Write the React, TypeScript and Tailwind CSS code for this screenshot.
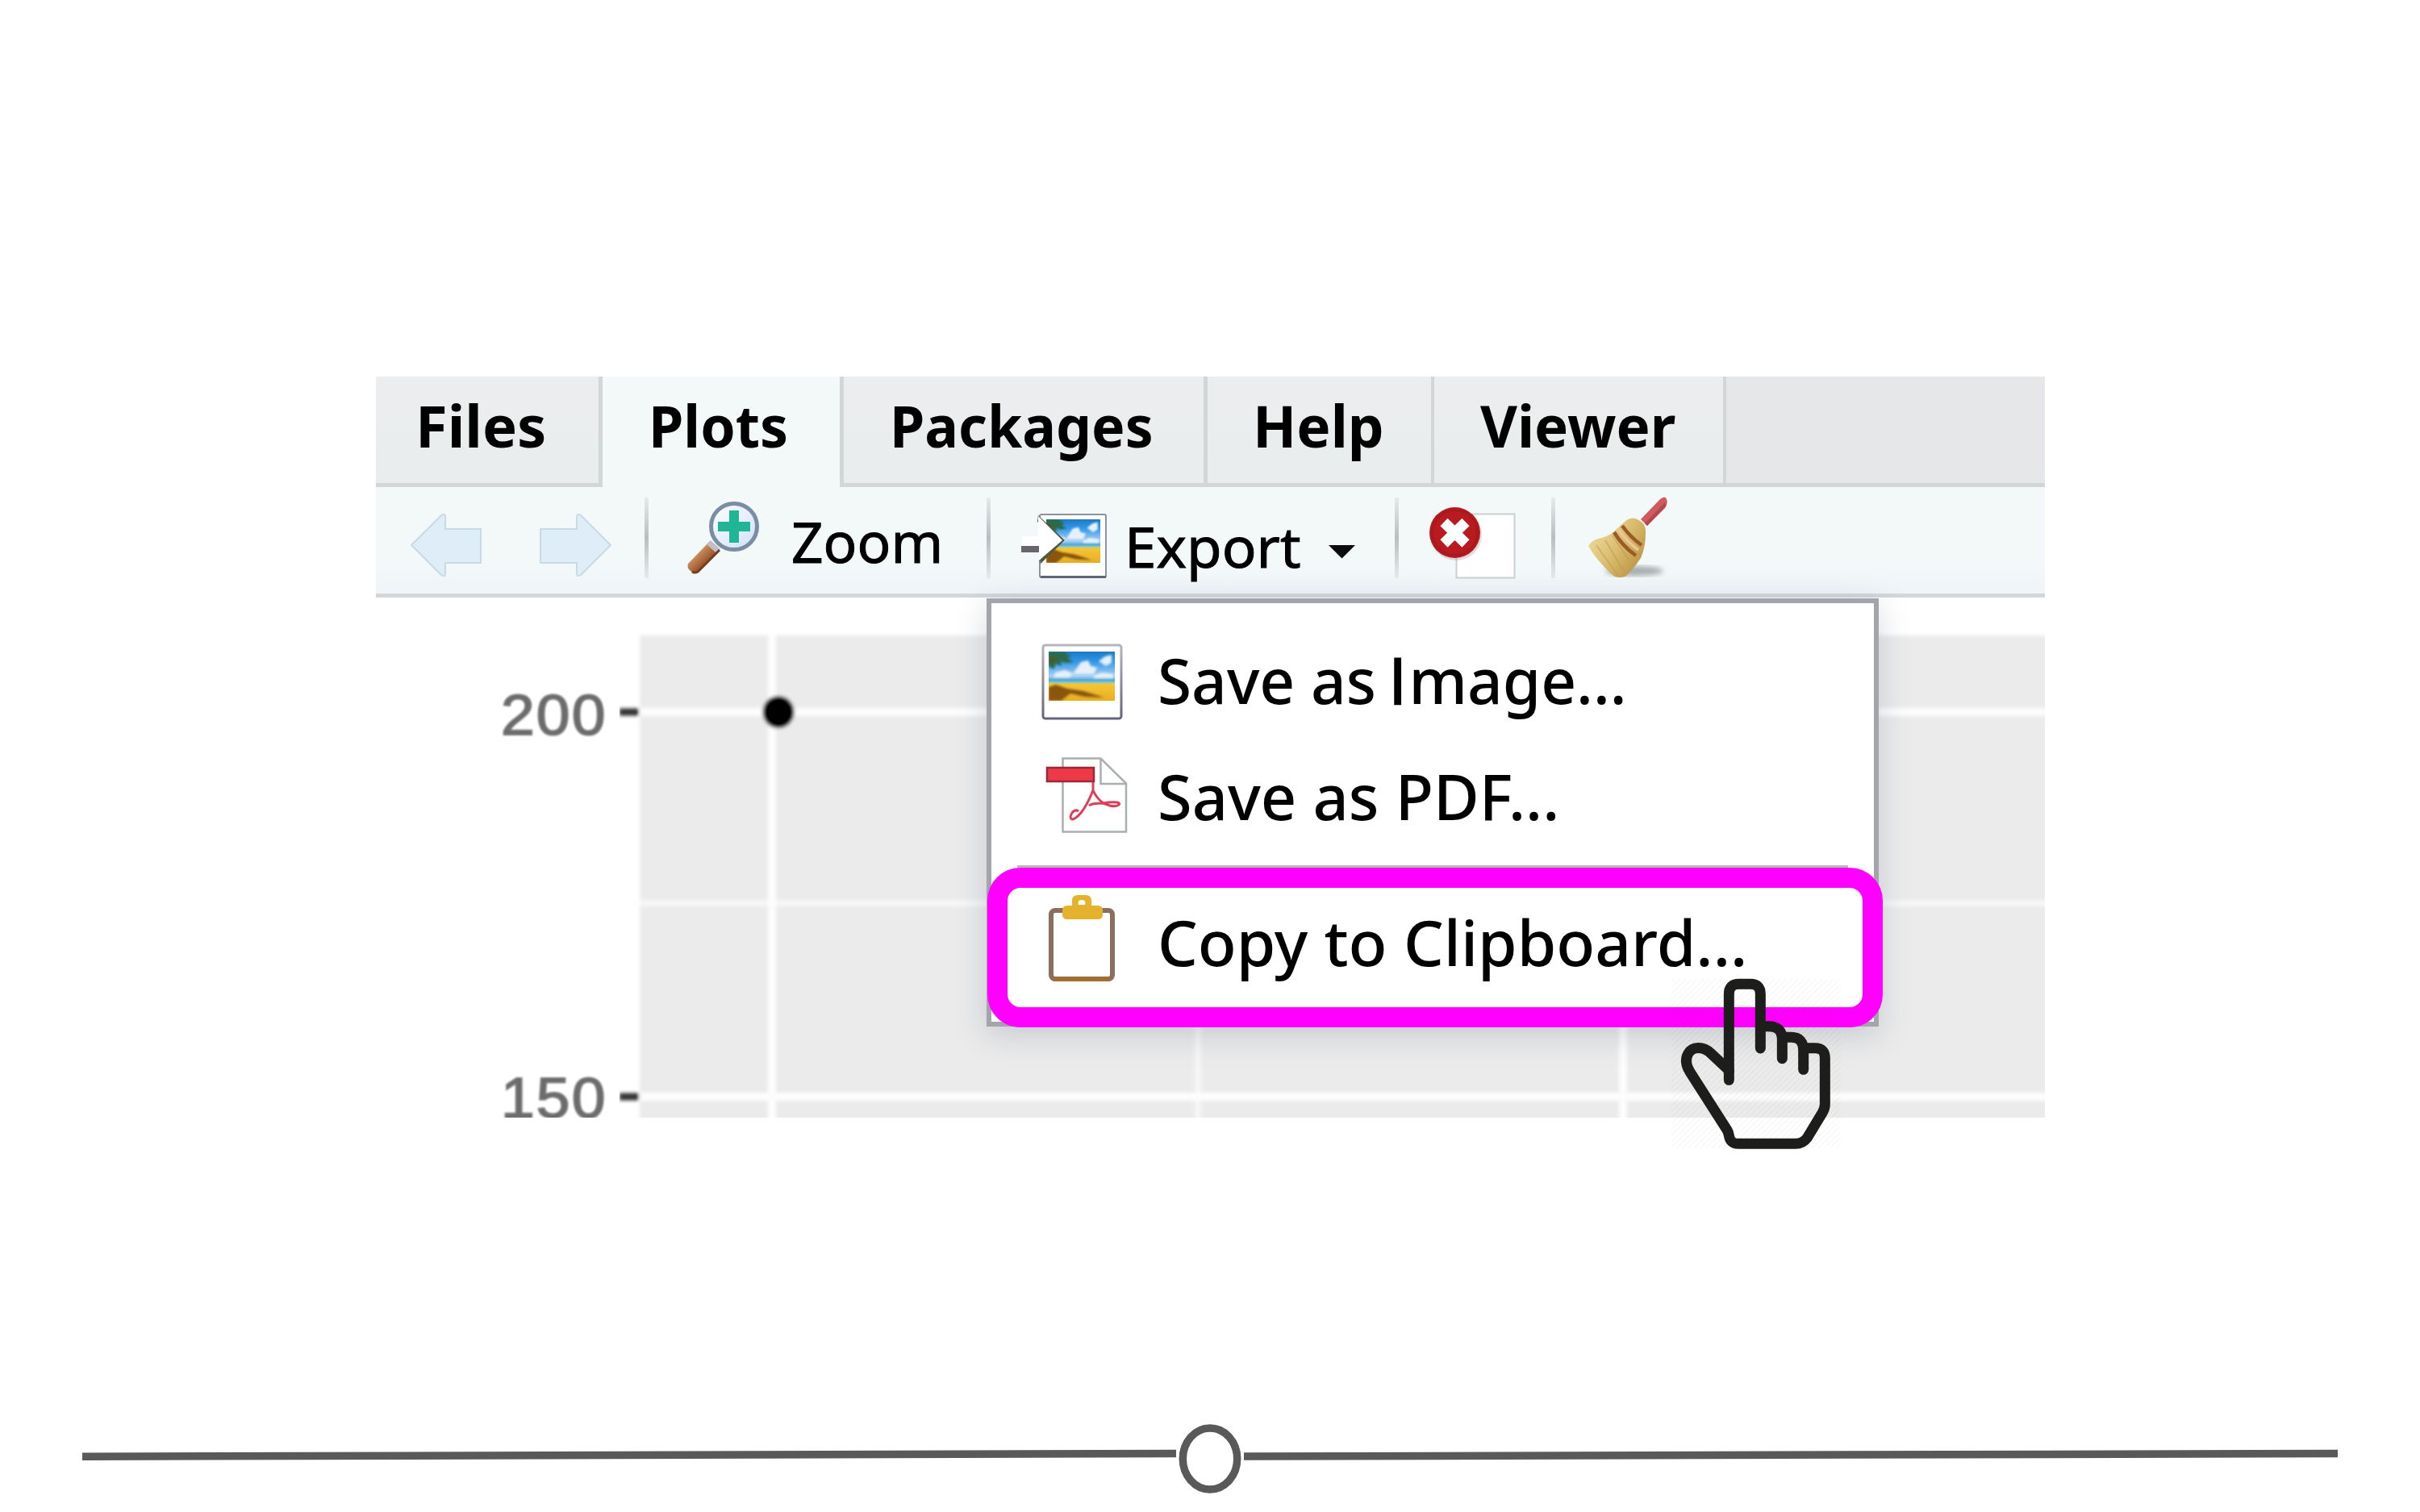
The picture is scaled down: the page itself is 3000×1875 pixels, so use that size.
import React, { useLayoutEffect, useRef, useState } from "react";

/* One line of text, stretched horizontally to an exact width. */
function Fit({ width, className, children }: { width: number; className: string; children: React.ReactNode }) {
  const ref = useRef<HTMLSpanElement>(null);
  const [scale, setScale] = useState(1);
  useLayoutEffect(() => {
    if (ref.current) setScale(width / ref.current.offsetWidth);
  }, [width]);
  return (
    <span className="block shrink-0" style={{ width }}>
      <span
        ref={ref}
        className={`inline-block origin-left whitespace-nowrap leading-none ${className}`}
        style={{ transform: `scaleX(${scale})` }}
      >
        {children}
      </span>
    </span>
  );
}

const NOTO = "font-['Noto_Sans','Open_Sans',sans-serif] text-black";

function Tab({ label, className, text }: { label: string; className: string; text: number }) {
  return (
    <div className={`h-[137px] shrink-0 pt-[25px] ${className}`}>
      <Fit width={text} className={`${NOTO} text-[71px] font-bold`}>{label}</Fit>
    </div>
  );
}

function Separator() {
  return <div className="mt-[13px] h-[100px] w-[5px] -mr-px shrink-0 bg-linear-to-b from-[#e6eaeb] via-[#b9bec1] to-[#e6eaeb]" />;
}

function Beach({ id, x, y, w, h }: { id: string; x: number; y: number; w: number; h: number }) {
  return (
    <svg x={x} y={y} width={w} height={h} viewBox="0 0 82 61" preserveAspectRatio="none">
      <defs>
        <linearGradient id={id} x1="0" y1="0" x2="0" y2="1">
          <stop offset="0" stopColor="#1f78c4" />
          <stop offset="0.2" stopColor="#2f97e6" />
          <stop offset="0.5" stopColor="#a9d0f5" />
          <stop offset="0.58" stopColor="#4fa9d6" />
          <stop offset="0.64" stopColor="#9fcdb0" />
          <stop offset="0.66" stopColor="#f3c637" />
          <stop offset="1" stopColor="#e9ae22" />
        </linearGradient>
        <filter id={`${id}-soft`}><feGaussianBlur stdDeviation="1.5" /></filter>
      </defs>
      <rect width="82" height="61" fill={`url(#${id})`} />
      <g filter={`url(#${id}-soft)`}>
        <path d="M34 22l6-9 9-2 3 7 8 2-4 8H30zM62 12l8-6 8-2v10l-7 4zM8 26l12-3 10 4-4 5H6zM56 30l10-4 14 2v5H56z" fill="#e6effc" />
        <path d="M0 0h18l10 6-5 2 8 5-10 1-6-2 1 6-7-3-3 7-6-4z" fill="#2b6b4c" />
        <path d="M0 6l12 2-6 5-6 4z" fill="#4b5b24" />
        <path d="M0 44l9-3 14 5 20 3 26 8-24-1-18-4-12 9H0z" fill="#8a5410" />
      </g>
    </svg>
  );
}

function ArrowsIcon() {
  return (
    <svg className="h-[132px] w-[333px] shrink-0" viewBox="466 604 333 132" fill="#deedf7" stroke="#c6dbe6" strokeWidth="2" strokeLinejoin="round">
      <path d="M510 676L547 639q5-3 5 2v15h44v42h-44v13q0 5-5 2z" />
      <path d="M757 676L720 639q-5-3-5 2v15h-45v42h45v13q0 5 5 2z" />
    </svg>
  );
}

function ZoomIcon() {
  return (
    <svg className="h-[132px] w-[178px] shrink-0" viewBox="803 604 178 132">
      <defs>
        <linearGradient id="lens" x1="0" y1="0" x2="1" y2="1">
          <stop offset="0" stopColor="#ffffff" />
          <stop offset="1" stopColor="#cfe0f8" />
        </linearGradient>
        <linearGradient id="handle" x1="0" y1="0" x2="1" y2="1">
          <stop offset="0.3" stopColor="#d29a6c" />
          <stop offset="0.6" stopColor="#a0592c" />
        </linearGradient>
      </defs>
      <path d="M880 671l12 11-27 27q-4 3-9-1t-3-9z" fill="url(#handle)" />
      <path d="M881 670l12 11-5 5-12-11z" fill="#c3bfc0" />
      <path d="M892 682l-27 27q-4 2-7 0" fill="none" stroke="#713d20" strokeWidth="3" />
      <circle cx="910" cy="653" r="28.5" fill="url(#lens)" stroke="#7b8da3" strokeWidth="5" />
      <path d="M904 633h12v14h14v12h-14v14h-12v-14h-14v-12h14z" fill="#1fb595" />
    </svg>
  );
}

function ExportIcon() {
  return (
    <svg className="h-[132px] w-[173px] shrink-0" viewBox="1227 604 173 132">
      <rect x="1289" y="638" width="82" height="78" rx="2" fill="#fff" stroke="#8d92a0" strokeWidth="2" />
      <path d="M1290 715.500h81" stroke="#62657a" strokeWidth="3" />
      <Beach id="beach-small" x={1297} y={644} w={67} h={54} />
      <path d="M1266 677h22v20l3-2v-10h-25z" fill="#69656c" />
      <path d="M1290 699l30-29-33-31-1 8 24 23-20 18z" fill="#4f5a3c" />
      <path d="M1267 665h20v-25l30 30-29 25v-18h-21z" fill="#fff" />
    </svg>
  );
}

function RemoveIcon() {
  return (
    <svg className="h-[132px] w-[190px] shrink-0" viewBox="1733 604 190 132">
      <rect x="1805.500" y="637.500" width="72" height="79" fill="#fff" stroke="#cacfd0" strokeWidth="2" />
      <circle cx="1805" cy="663" r="32" fill="#a58b8d" opacity="0.3" />
      <circle cx="1803.500" cy="660.500" r="31.500" fill="#b81a20" />
      <circle cx="1803.500" cy="660.500" r="28" fill="none" stroke="#a51b1f" strokeWidth="3" />
      <path d="M1790 647.500l27 26.500M1817 647.500l-27 26.500" stroke="#fff" strokeWidth="13" />
    </svg>
  );
}

function BroomIcon() {
  return (
    <svg className="h-[132px] w-[180px] shrink-0" viewBox="1927 604 180 132">
      <defs>
        <linearGradient id="straw" x1="0" y1="0.200" x2="1" y2="0.900">
          <stop offset="0" stopColor="#efdc9f" />
          <stop offset="0.450" stopColor="#dcbf74" />
          <stop offset="1" stopColor="#b58c38" />
        </linearGradient>
        <filter id="broom-shadow"><feGaussianBlur stdDeviation="3" /></filter>
      </defs>
      <ellipse cx="2026" cy="708" rx="36" ry="6" fill="#8d9494" opacity="0.75" filter="url(#broom-shadow)" />
      <path d="M2058 619q6-5 8 0 2 5-2 11l-22 22-8-8z" fill="#cf5b60" />
      <path d="M2065 628l-23 24-3-3 25-26z" fill="#b5474e" />
      <path d="M1969 677q3-6 12-9 11-2 19-8 10-10 18-16 8-4 15 2 8 4 7 16 0 16-6 30-8 12-16 20-3 4-10 4t-9-3q-20-18-30-36z" fill="url(#straw)" />
      <path d="M1979 676l27 38M1990 670l24 40M1999 664l24 36" stroke="#c19b4a" strokeWidth="1.500" opacity="0.600" fill="none" />
      <path d="M2001 660q10 17 27 29M2011 652q10 14 24 24" stroke="#9a5b28" strokeWidth="4.500" fill="none" />
      <path d="M2006 656q10 15 25 26" stroke="#ecc694" strokeWidth="3.500" fill="none" />
    </svg>
  );
}

function PhotoIcon() {
  return (
    <svg className="h-[143px] w-[205px] shrink-0" viewBox="1230 768 205 143">
      <defs>
        <linearGradient id="photo-frame" x1="0" y1="0" x2="0" y2="1">
          <stop offset="0" stopColor="#b4b6be" />
          <stop offset="1" stopColor="#62647a" />
        </linearGradient>
      </defs>
      <rect x="1293" y="800" width="97" height="91" rx="3" fill="#fff" stroke="url(#photo-frame)" strokeWidth="3" />
      <Beach id="beach-large" x={1300} y={808} w={82} h={61} />
    </svg>
  );
}

function PdfIcon() {
  return (
    <svg className="h-[143px] w-[205px] shrink-0" viewBox="1230 911 205 143">
      <path d="M1317.500 940.500h47l31.500 31v60h-78.500z" fill="#fff" stroke="#a9b0ae" strokeWidth="2.500" />
      <path d="M1364.500 941v31h31" fill="none" stroke="#a9b0ae" strokeWidth="2.500" />
      <rect x="1298" y="952" width="58" height="17" fill="#ee3a48" stroke="#9c2938" strokeWidth="2.500" />
      <path d="M1355 970v10q-7 18-15 28-7 8-11 8-4-2 0-8 4-5 8-2M1355 980q5 11 13 16 10-2 17-1 4 1 2 3-4 3-11 1l-9-3q-14 0-17 3" fill="none" stroke="#dc3f57" strokeWidth="3" strokeLinejoin="round" />
    </svg>
  );
}

function ClipboardIcon() {
  return (
    <svg className="h-[191px] w-[205px] shrink-0" viewBox="1230 1076 205 191">
      <rect x="1303" y="1129" width="76" height="85" rx="5" fill="#fff" stroke="#8a6f60" strokeWidth="6" />
      <path d="M1306 1214h70" stroke="#a26e30" strokeWidth="6" />
      <path fillRule="evenodd" d="M1329 1123v-6q0-7 7-7h10q7 0 7 7v6h8q6 0 6 6v5q0 6-6 6h-38q-6 0-6-6v-5q0-6 6-6zM1337 1122h8q2-6-4-6t-4 6z" fill="#e5b22d" />
    </svg>
  );
}

function HandCursor() {
  return (
    <svg className="absolute left-[2072px] top-[1212px] h-[216px] w-[212px]" viewBox="276 456 636 648">
      <defs>
        <pattern id="hatch" width="22" height="22" patternUnits="userSpaceOnUse">
          <path d="M-2 24L24-2M-2 2L2-2M20 24l4-4" stroke="#000" strokeWidth="2.500" opacity="0.070" />
        </pattern>
      </defs>
      <rect x="276" y="462" width="628" height="632" fill="url(#hatch)" />
      <g fill="none" stroke="#1d1d1b" strokeWidth="39" strokeLinecap="round" strokeLinejoin="round">
        <path d="M490 838V518q0-37 37-37h43q37 0 37 37v202" />
        <path d="M490 802L422 738c-28-26-68-26-84 2-12 22-6 46 6 66L482 1022q6 10 8 22 4 31 35 31h212q28 0 44-22L836 962q11-17 11-34V756q0-37-37-37h-42" />
        <path d="M616 638h22q50 0 50 50v70" />
        <path d="M696 679h26q45 0 45 50v70" />
      </g>
    </svg>
  );
}

function Plot() {
  return (
    <div className="flex h-[645px] overflow-hidden bg-white">
      <div className="flex w-[302px] shrink-0 flex-col pl-[155px] pt-[110px]">
        {["200", "150"].map((v) => (
          <div key={v} className="h-[475px] shrink-0">
            <Fit width={131} className="font-['Liberation_Sans',sans-serif] text-[71px] tracking-[2px] text-[#6b6b6b] blur-[1px] [-webkit-text-stroke:2px_#757575]">{v}</Fit>
          </div>
        ))}
      </div>
      <svg className="h-[645px] w-[1767px] shrink-0" viewBox="768 741 1767 645">
        <defs><filter id="plot-soft" x="-0.100" y="-0.100" width="1.200" height="1.200"><feGaussianBlur stdDeviation="2" /></filter></defs>
        <g filter="url(#plot-soft)">
          <path d="M793 788h1780v640H793z" fill="#ebebeb" />
          <path d="M793 1120h1780M1485 788v640" stroke="#f6f6f6" strokeWidth="8" />
          <path d="M793 883h1780M793 1360h1780M957 788v640M2012 788v640" stroke="#fdfdfd" strokeWidth="10" />
          <path d="M768 883h24M768 1360h24" stroke="#333" strokeWidth="9" />
          <ellipse cx="965" cy="883" rx="19.500" ry="20" fill="#000" />
        </g>
      </svg>
    </div>
  );
}

function ExportMenu() {
  const text = `${NOTO} text-[78px] font-medium`;
  return (
    <div className="absolute left-[1223px] top-[742px] h-[531px] w-[1106px] border-[6px] border-[#a3a5aa] bg-white pt-[20px] shadow-[0_10px_36px_rgba(70,80,110,0.22)]">
      <div className="flex h-[143px] pl-px">
        <PhotoIcon />
        <div className="pt-[36px]">
          <Fit width={582} className={text}>Save as <span className="font-['Open_Sans',sans-serif] -ml-[4px] mr-[3px] [-webkit-text-stroke:2.5px_#000]">I</span>mage...</Fit>
        </div>
      </div>
      <div className="flex h-[143px] pl-px">
        <PdfIcon />
        <div className="pt-[37px]"><Fit width={498} className={text}>Save as PDF...</Fit></div>
      </div>
      <div className="ml-[32px] mt-[19px] h-[3px] w-[1030px] bg-[#b8b8b8]" />
      <div className="flex h-[191px] pl-px">
        <ClipboardIcon />
        <div className="pt-[53px]"><Fit width={731} className={text}>Copy to Clipboard...</Fit></div>
      </div>
    </div>
  );
}

export default function App() {
  return (
    <div className="relative h-[1875px] w-[3000px] overflow-hidden bg-white pl-[466px] pt-[467px]">
      <div className="h-[919px] w-[2069px] overflow-hidden">
        <div className="flex h-[137px] bg-[#e5e7e9]">
          <Tab label="Files" text={162} className="w-[281px] border-b-[5px] border-r-[5px] border-[#d2d6d7] bg-linear-to-b from-[#ecedef] to-[#e9eded] pl-[49px]" />
          <Tab label="Plots" text={173} className="w-[294px] bg-[#f3f8f9] pl-[57px]" />
          <Tab label="Packages" text={327} className="w-[456px] border-b-[5px] border-x-[5px] border-[#d2d6d7] bg-linear-to-b from-[#ecedef] to-[#e9eded] pl-[57px]" />
          <Tab label="Help" text={163} className="w-[281px] border-b-[5px] border-r-[4px] border-[#d2d6d7] bg-linear-to-b from-[#ecedef] to-[#e9eded] pl-[56px]" />
          <Tab label="Viewer" text={242} className="w-[362px] border-b-[5px] border-r-[4px] border-[#d2d6d7] bg-linear-to-b from-[#ecedef] to-[#e9eded] pl-[57px]" />
          <div className="grow border-b-[5px] border-[#d2d6d7]" />
        </div>
        <div className="flex h-[137px] border-b-[5px] border-[#d3d7da] bg-linear-to-b from-[#f3f8f9] from-70% to-[#eff4f8]">
          <ArrowsIcon />
          <Separator />
          <ZoomIcon />
          <div className="w-[242px] shrink-0 pt-[32px]"><Fit width={188} className={`${NOTO} text-[70px] [-webkit-text-stroke:1px_#000]`}>Zoom</Fit></div>
          <Separator />
          <ExportIcon />
          <div className="-ml-[6px] w-[216px] shrink-0 pt-[38px]"><Fit width={219} className={`${NOTO} text-[70px] [-webkit-text-stroke:1px_#000]`}>Export</Fit></div>
          <svg className="h-[132px] w-[119px] shrink-0" viewBox="1610 604 119 132"><path d="M1647 676h33l-16.500 16.500z" fill="#0c0c0c" /></svg>
          <Separator />
          <RemoveIcon />
          <Separator />
          <BroomIcon />
        </div>
        <Plot />
      </div>

      <ExportMenu />
      <div className="absolute left-[1224px] top-[1076px] h-[198px] w-[1110px] rounded-[41px] border-[25px] border-[#ff00ff]" />
      <HandCursor />

      <svg className="absolute left-0 top-[1755px] h-[110px] w-[3000px]" viewBox="0 1755 3000 110" fill="none" stroke="#595959" strokeWidth="9.500">
        <path d="M102 1806.300L1458 1802.500M1542 1806L2898 1802.500" />
        <ellipse cx="1500" cy="1809" rx="33.700" ry="38" />
      </svg>
    </div>
  );
}
